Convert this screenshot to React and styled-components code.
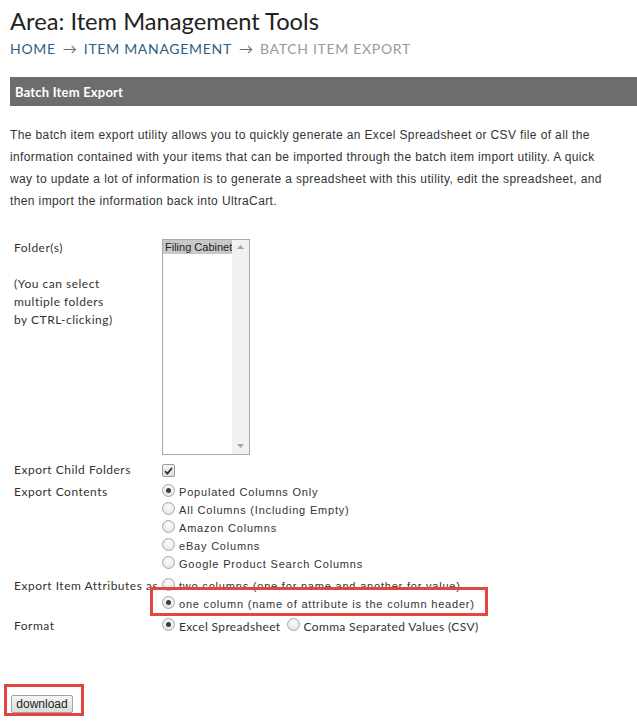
import React from "react";
import styled, { createGlobalStyle } from "styled-components";

const GlobalStyle = createGlobalStyle`
  html, body { margin: 0; padding: 0; background: #fff; }
  body { font-family: Lato, "Open Sans", Arial, sans-serif; color: #333; }
`;

const Page = styled.div`
  padding: 7px 0 0 10px;
`;

const Title = styled.h1`
  margin: 0;
  font-family: Lato, sans-serif;
  font-weight: 400;
  font-size: 23.7px;
  line-height: 28px;
  color: #222;
`;

const Crumbs = styled.nav`
  margin-top: 5px;
  font-family: Lato, sans-serif;
  font-size: 14px;
  line-height: 18px;
  letter-spacing: 0.7px;
  text-transform: uppercase;
  display: flex;
  gap: 7px;
`;

const Crumb = styled.a`
  color: ${(p) => (p.$current ? "#9a9a9a" : "#2d5f86")};
  text-decoration: none;
`;

const Arrow = styled.span`
  color: #666;
  letter-spacing: 0;
`;

const SectionBar = styled.div`
  margin-top: 19px;
  height: 29px;
  background: #6d6d6d;
  color: #fff;
  font-family: Lato, sans-serif;
  font-weight: 700;
  font-size: 13px;
  letter-spacing: 0.2px;
  display: flex;
  align-items: center;
  padding-left: 5px;
`;

const Intro = styled.p`
  margin: 18px 0 0;
  padding-right: 30px;
  font-family: Arial, "Liberation Sans", sans-serif;
  font-size: 12px;
  line-height: 22px;
  letter-spacing: 0.38px;
  color: #333;
`;

const Form = styled.div`
  margin-top: 27px;
  padding-left: 4px;
  display: grid;
  grid-template-columns: 148px 1fr;
  row-gap: 4px;
`;

const Label = styled.div`
  font-family: Lato, sans-serif;
  font-size: 12px;
  line-height: 18px;
  letter-spacing: 0.5px;
  color: #333;
  white-space: nowrap;
`;

const Hint = styled.div`
  margin-top: 18px;
`;

const Field = styled.div`
  display: flex;
  flex-direction: column;
`;

const ListBox = styled.div`
  width: 86px;
  height: 214px;
  border: 1px solid #a9a9a9;
  display: flex;
  margin-bottom: 2px;
  background: #fff;
`;

const Options = styled.div`
  flex: 1;
`;

const Option = styled.div`
  font-family: Arial, "Liberation Sans", sans-serif;
  font-size: 11px;
  line-height: 14px;
  padding-left: 2px;
  color: #222;
  background: ${(p) => (p.$selected ? "#c8c8c8" : "transparent")};
  white-space: nowrap;
`;

const ScrollTrack = styled.div`
  width: 17px;
  background: #f1f1f1;
  display: flex;
  flex-direction: column;
  justify-content: space-between;
  align-items: center;
  padding: 5px 0 6px;
  box-sizing: border-box;
`;

const Check = styled.span`
  width: 13px;
  height: 13px;
  box-sizing: border-box;
  border: 1px solid #9a9a9a;
  border-radius: 2px;
  background: linear-gradient(#f4f4f4, #dcdcdc);
  display: inline-flex;
  align-items: center;
  justify-content: center;
  margin-top: 1px;
`;

const RadioLine = styled.label`
  position: relative;
  display: flex;
  align-items: center;
  height: 18px;
  gap: 4px;
`;

const Radio = styled.span`
  flex: none;
  width: 13px;
  height: 13px;
  box-sizing: border-box;
  border-radius: 50%;
  border: 1px solid #a6a6a6;
  background: radial-gradient(circle at 50% 35%, #fdfdfd, #dedede);
  display: inline-flex;
  align-items: center;
  justify-content: center;
  margin-top: -4px;
  &::after {
    content: "";
    width: 5px;
    height: 5px;
    border-radius: 50%;
    background: ${(p) => (p.$on ? "#3c3c3c" : "transparent")};
  }
`;

const ChoiceText = styled.span`
  font-family: ${(p) => (p.$lato ? "Lato, sans-serif" : 'Arial, "Liberation Sans", sans-serif')};
  font-size: ${(p) => (p.$lato ? "12px" : "11px")};
  letter-spacing: ${(p) => (p.$lato ? "0.35px" : "0.8px")};
  color: #333;
  white-space: nowrap;
  margin-right: ${(p) => (p.$lato ? "2px" : "0")};
`;

const Highlight = styled.span`
  position: absolute;
  left: -12px;
  width: 338px;
  top: -8px;
  bottom: -3px;
  border: 3px solid #e4463e;
  box-sizing: border-box;
  pointer-events: none;
`;

const ButtonArea = styled.div`
  position: relative;
  margin-top: 57px;
  padding-left: 1px;
  height: 30px;
`;

const Button = styled.button`
  width: 62px;
  height: 18px;
  padding: 0;
  border: 1px solid #a3a3a3;
  border-radius: 2px;
  background: linear-gradient(#f6f6f6, #dddddd);
  font-family: Arial, "Liberation Sans", sans-serif;
  font-size: 12px;
  color: #222;
`;

const ButtonHighlight = styled.span`
  position: absolute;
  left: -6px;
  top: -8px;
  width: 80px;
  height: 32px;
  border: 3px solid #e4463e;
  box-sizing: border-box;
  pointer-events: none;
`;

const ScrollArrow = ({ up }) => (
  <svg width="7" height="4" viewBox="0 0 7 4">
    <path d={up ? "M0 4 L3.5 0 L7 4 Z" : "M0 0 L3.5 4 L7 0 Z"} fill="#a3a3a3" />
  </svg>
);

const Choice = ({ on, lato, children, highlighted }) => (
  <RadioLine>
    <Radio $on={on} />
    <ChoiceText $lato={lato}>{children}</ChoiceText>
    {highlighted && <Highlight />}
  </RadioLine>
);

export default function App() {
  return (
    <>
      <GlobalStyle />
      <Page>
        <Title>Area: Item Management Tools</Title>
        <Crumbs>
          <Crumb href="#">Home</Crumb>
          <Arrow>→</Arrow>
          <Crumb href="#">Item Management</Crumb>
          <Arrow>→</Arrow>
          <Crumb $current>Batch Item Export</Crumb>
        </Crumbs>

        <SectionBar>Batch Item Export</SectionBar>

        <Intro>
          The batch item export utility allows you to quickly generate an Excel Spreadsheet or CSV file of all the
          information contained with your items that can be imported through the batch item import utility. A quick
          way to update a lot of information is to generate a spreadsheet with this utility, edit the spreadsheet, and
          then import the information back into UltraCart.
        </Intro>

        <Form>
          <Label>
            Folder(s)
            <Hint>
              (You can select
              <br />
              multiple folders
              <br />
              by CTRL-clicking)
            </Hint>
          </Label>
          <Field>
            <ListBox>
              <Options>
                <Option $selected>Filing Cabinet</Option>
              </Options>
              <ScrollTrack>
                <ScrollArrow up />
                <ScrollArrow />
              </ScrollTrack>
            </ListBox>
          </Field>

          <Label>Export Child Folders</Label>
          <Field>
            <RadioLine>
              <Check>
                <svg width="9" height="8" viewBox="0 0 9 8">
                  <path d="M1 4.2 L3.4 6.6 L8 1" stroke="#333" strokeWidth="1.8" fill="none" />
                </svg>
              </Check>
            </RadioLine>
          </Field>

          <Label>Export Contents</Label>
          <Field>
            <Choice on>Populated Columns Only</Choice>
            <Choice>All Columns (Including Empty)</Choice>
            <Choice>Amazon Columns</Choice>
            <Choice>eBay Columns</Choice>
            <Choice>Google Product Search Columns</Choice>
          </Field>

          <Label>Export Item Attributes as</Label>
          <Field>
            <Choice>two columns (one for name and another for value)</Choice>
            <Choice on highlighted>
              one column (name of attribute is the column header)
            </Choice>
          </Field>

          <Label>Format</Label>
          <Field>
            <RadioLine>
              <Radio $on />
              <ChoiceText $lato>Excel Spreadsheet</ChoiceText>
              <Radio />
              <ChoiceText $lato>Comma Separated Values (CSV)</ChoiceText>
            </RadioLine>
          </Field>
        </Form>

        <ButtonArea>
          <Button type="button">download</Button>
          <ButtonHighlight />
        </ButtonArea>
      </Page>
    </>
  );
}
